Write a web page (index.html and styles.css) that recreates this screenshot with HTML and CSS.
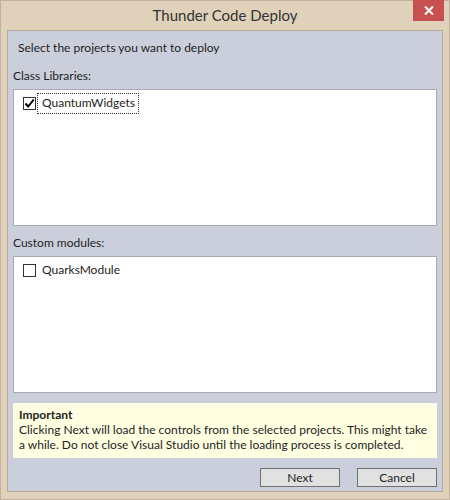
FILE: index.html
```html
<!DOCTYPE html>
<html>
<head>
<meta charset="utf-8">
<link rel="stylesheet" href="styles.css">
</head>
<body>
<div class="window">
  <div class="titlebar">
    <div class="title">Thunder Code Deploy</div>
    <div class="close">
      <svg width="10" height="9" viewBox="0 0 10 9"><path d="M1 0.5 L9 8.5 M9 0.5 L1 8.5" stroke="#fff" stroke-width="2"/></svg>
    </div>
  </div>
  <div class="client">
    <div class="intro">Select the projects you want to deploy</div>
    <div class="label">Class Libraries:</div>
    <div class="listbox">
      <div class="item">
        <span class="check checked">
          <svg width="11" height="11" viewBox="0 0 11 11"><path d="M1.5 5.5 L4.2 8.5 L9.8 1.5" fill="none" stroke="#000" stroke-width="2"/></svg>
        </span>
        <span class="itemtext focus">QuantumWidgets</span>
      </div>
    </div>
    <div class="label label2">Custom modules:</div>
    <div class="listbox">
      <div class="item">
        <span class="check"></span>
        <span class="itemtext">QuarksModule</span>
      </div>
    </div>
    <div class="notice">
      <div class="notice-title">Important</div>
      <div>Clicking Next will load the controls from the selected projects. This might take a while. Do not close Visual Studio until the loading process is completed.</div>
    </div>
    <div class="buttons">
      <button class="btn">Next</button>
      <button class="btn">Cancel</button>
    </div>
  </div>
</div>
</body>
</html>
```
FILE: styles.css
```css
html, body {
  margin: 0;
  padding: 0;
}
body {
  font-family: Lato, "Noto Sans", sans-serif;
  font-size: 12px;
  color: #1e1e1e;
}
.window {
  width: 450px;
  height: 500px;
  box-sizing: border-box;
  background: #e0d1ba;
  border: 1px solid #c2b29b;
  display: flex;
  flex-direction: column;
}
.titlebar {
  height: 29px;
  position: relative;
  display: flex;
  align-items: center;
  justify-content: center;
}
.title {
  font-size: 15px;
  color: #333;
  margin-top: -2px;
}
.close {
  position: absolute;
  top: -1px;
  right: 5px;
  width: 31px;
  height: 21px;
  background: #c75050;
  display: flex;
  align-items: center;
  justify-content: center;
}
.client {
  margin: 0 6px 7px 6px;
  flex: 1;
  background: #cbcedb;
  border: 1px solid #b6aa98;
  padding: 0 5px 0 5px;
  display: flex;
  flex-direction: column;
}
.intro {
  padding: 8px 0 0 5px;
  line-height: 18px;
  height: 28px;
}
.label {
  line-height: 18px;
  height: 22px;
}
.label2 {
  margin-top: 8px;
  height: 22px;
}
.listbox {
  height: 135px;
  background: #fff;
  border: 1px solid #a8aab2;
}
.item {
  display: flex;
  align-items: center;
  padding: 3px 0 0 9px;
  height: 20px;
}
.check {
  width: 11px;
  height: 11px;
  border: 1px solid #333;
  background: #fff;
  display: flex;
  align-items: center;
  justify-content: center;
}
.itemtext {
  margin-left: 1px;
  padding: 1px 3px 2px 4px;
  line-height: 16px;
  border: 1px solid transparent;
}
.focus {
  border: 1px dotted #333;
}
.notice {
  margin-top: 10px;
  background: #ffffe1;
  padding: 4px 6px 6px 6px;
  line-height: 15px;
  height: 45px;
}
.notice-title {
  font-weight: bold;
}
.buttons {
  display: flex;
  justify-content: flex-end;
  gap: 17px;
  margin-top: 10px;
}
.btn {
  width: 80px;
  height: 19px;
  padding: 0;
  margin: 0;
  font-family: inherit;
  font-size: 12px;
  color: #1e1e1e;
  background: #e1e1e1;
  border: 1px solid #707070;
  line-height: 16px;
}
```
